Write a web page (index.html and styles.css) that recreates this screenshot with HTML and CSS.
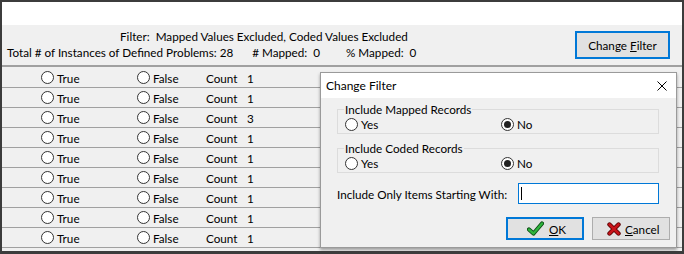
FILE: index.html
```html
<!DOCTYPE html>
<html>
<head>
<meta charset="utf-8">
<link rel="stylesheet" href="styles.css">
</head>
<body>
<div class="window">
  <div class="topbar"></div>
  <div class="header">
    <div class="stats">
      <div class="filter-line">Filter:  Mapped Values Excluded, Coded Values Excluded</div>
      <div class="totals"><span class="total">Total # of Instances of Defined Problems: 28</span><span class="mapped"># Mapped:  0</span><span class="pct">% Mapped:  0</span></div>
    </div>
    <div class="btn btn-focus btn-filter"><span>Change <u>F</u>ilter</span></div>
  </div>
  <div class="rows">
    <div class="row"><span class="opt opt-true"><i class="radio"></i>True</span><span class="opt opt-false"><i class="radio"></i>False</span><span class="count-lbl">Count</span><span>1</span></div>
    <div class="row"><span class="opt opt-true"><i class="radio"></i>True</span><span class="opt opt-false"><i class="radio"></i>False</span><span class="count-lbl">Count</span><span>1</span></div>
    <div class="row"><span class="opt opt-true"><i class="radio"></i>True</span><span class="opt opt-false"><i class="radio"></i>False</span><span class="count-lbl">Count</span><span>3</span></div>
    <div class="row"><span class="opt opt-true"><i class="radio"></i>True</span><span class="opt opt-false"><i class="radio"></i>False</span><span class="count-lbl">Count</span><span>1</span></div>
    <div class="row"><span class="opt opt-true"><i class="radio"></i>True</span><span class="opt opt-false"><i class="radio"></i>False</span><span class="count-lbl">Count</span><span>1</span></div>
    <div class="row"><span class="opt opt-true"><i class="radio"></i>True</span><span class="opt opt-false"><i class="radio"></i>False</span><span class="count-lbl">Count</span><span>1</span></div>
    <div class="row"><span class="opt opt-true"><i class="radio"></i>True</span><span class="opt opt-false"><i class="radio"></i>False</span><span class="count-lbl">Count</span><span>1</span></div>
    <div class="row"><span class="opt opt-true"><i class="radio"></i>True</span><span class="opt opt-false"><i class="radio"></i>False</span><span class="count-lbl">Count</span><span>1</span></div>
    <div class="row"><span class="opt opt-true"><i class="radio"></i>True</span><span class="opt opt-false"><i class="radio"></i>False</span><span class="count-lbl">Count</span><span>1</span></div>
    <div class="row row-cut"><span class="opt opt-true"><i class="radio"></i></span><span class="opt opt-false"><i class="radio"></i></span></div>
  </div>

  <div class="dialog">
    <div class="titlebar">
      <span class="title">Change Filter</span>
      <svg class="close" width="10" height="10" viewBox="0 0 10 10"><path d="M0.5 0.5 L9.5 9.5 M9.5 0.5 L0.5 9.5" stroke="#000" stroke-width="1" fill="none"/></svg>
    </div>
    <div class="dbody">
      <fieldset class="group">
        <legend>Include Mapped Records</legend>
        <div class="group-row"><span class="opt opt-yes"><i class="radio"></i>Yes</span><span class="opt"><i class="radio checked"></i>No</span></div>
      </fieldset>
      <fieldset class="group group2">
        <legend>Include Coded Records</legend>
        <div class="group-row"><span class="opt opt-yes"><i class="radio"></i>Yes</span><span class="opt"><i class="radio checked"></i>No</span></div>
      </fieldset>
      <div class="starts">
        <span>Include Only Items Starting With:</span>
        <div class="textbox"><span class="caret"></span></div>
      </div>
      <div class="buttons">
        <div class="btn btn-focus btn-ok">
          <svg class="icon-ok" width="17" height="15" viewBox="0 0 17 15"><path d="M2 8.5 L6.5 12.5 L15 2.5" stroke="#0b4a12" stroke-width="4.2" fill="none" stroke-linecap="round" stroke-linejoin="round"/><path d="M2 8.5 L6.5 12.5 L15 2.5" stroke="#2fb43c" stroke-width="2.4" fill="none" stroke-linecap="round" stroke-linejoin="round"/></svg>
          <span><u>O</u>K</span>
        </div>
        <div class="btn btn-cancel">
          <svg class="icon-x" width="14" height="14" viewBox="0 0 14 14"><path d="M2.5 2.5 L11.5 11.5 M11.5 2.5 L2.5 11.5" stroke="#5a0000" stroke-width="4.4" fill="none" stroke-linecap="round"/><path d="M2.5 2.5 L11.5 11.5 M11.5 2.5 L2.5 11.5" stroke="#c8141a" stroke-width="2.6" fill="none" stroke-linecap="round"/></svg>
          <span><u>C</u>ancel</span>
        </div>
      </div>
    </div>
  </div>
</div>
</body>
</html>
```

FILE: styles.css
```css
* { box-sizing: border-box; }
html, body { margin: 0; padding: 0; }
body {
  font-family: "Lato", "Noto Sans", sans-serif;
  font-size: 11.7px;
  color: #000;
  background: #3c3c3c;
}
.window {
  position: relative;
  width: 684px;
  height: 254px;
  border: 2px solid #3c3c3c;
  border-bottom-width: 3px;
  background: #f0f0f0;
  display: flex;
  flex-direction: column;
  overflow: hidden;
}
.topbar {
  height: 23px;
  background: #fff;
  flex: none;
}
.header {
  height: 42px;
  flex: none;
  border-bottom: 2px solid #a0a0a0;
  display: flex;
  align-items: flex-start;
  justify-content: space-between;
  padding: 3px 12px 0 5px;
}
.stats { line-height: 16px; }
.filter-line { padding-left: 113px; white-space: pre; }
.totals { display: flex; white-space: pre; }
.mapped { margin-left: 19px; }
.pct { margin-left: 26px; }
.btn {
  display: flex;
  align-items: center;
  background: #e1e1e1;
  border: 1px solid #adadad;
  line-height: 16px;
}
.btn-focus { border: 2px solid #0078d7; }
.btn-filter {
  margin-top: 3px;
  width: 95px;
  height: 28px;
  justify-content: center;
  white-space: pre;
}
.rows { flex: 1; padding-top: 1px; }
.row {
  height: 20px;
  flex: none;
  border-bottom: 1px solid #a0a0a0;
  display: flex;
  align-items: center;
  padding-left: 39px;
  line-height: 16px;
}
.opt { display: flex; align-items: center; }
.opt-true { width: 96px; }
.opt-false { width: 69px; }
.count-lbl { width: 41px; }
.radio {
  display: inline-block;
  width: 13px;
  height: 13px;
  border: 1px solid #333;
  border-radius: 50%;
  background: #fff;
  margin-right: 3px;
  position: relative;
  flex: none;
}
.radio.checked::after {
  content: "";
  position: absolute;
  left: 2px;
  top: 2px;
  width: 7px;
  height: 7px;
  border-radius: 50%;
  background: #222;
}
.dialog {
  position: absolute;
  left: 318px;
  top: 70px;
  width: 357px;
  height: 176px;
  background: #f0f0f0;
  border: 1px solid #9a9a9a;
  box-shadow: 0 2px 3px rgba(0,0,0,0.35);
  display: flex;
  flex-direction: column;
}
.titlebar {
  height: 25px;
  background: #fff;
  display: flex;
  align-items: center;
  justify-content: space-between;
  padding: 0 9px 0 5px;
  flex: none;
}
.title { font-size: 12px; }
.close { display: block; }
.dbody {
  padding: 3px 17px 0 16px;
}
.group {
  margin: 0;
  padding: 0 6px 1px 6px;
  border: 1px solid #dcdcdc;
  min-width: 0;
}
.group legend {
  padding: 0 1px;
  line-height: 16px;
}
.group2 { margin-top: 6px; }
.group-row {
  display: flex;
  align-items: center;
  height: 15px;
  line-height: 15px;
}
.group-row .opt { padding-left: 1px; }
.opt-yes { width: 156px; }
.starts {
  margin-top: 10px;
  display: flex;
  align-items: center;
  justify-content: space-between;
}
.textbox {
  width: 141px;
  height: 21px;
  background: #fff;
  border: 1px solid #0078d7;
  padding: 3px 0 0 2px;
}
.caret {
  display: block;
  width: 1px;
  height: 13px;
  background: #000;
}
.buttons {
  margin-top: 13px;
  margin-right: -11px;
  display: flex;
  justify-content: flex-end;
  gap: 8px;
}
.btn-ok, .btn-cancel { width: 78px; height: 23px; }
.btn-ok { padding-left: 19px; }
.btn-ok svg { margin-right: 5px; }
.btn-cancel { padding-left: 14px; }
.btn-cancel svg { margin-right: 4px; }
```
